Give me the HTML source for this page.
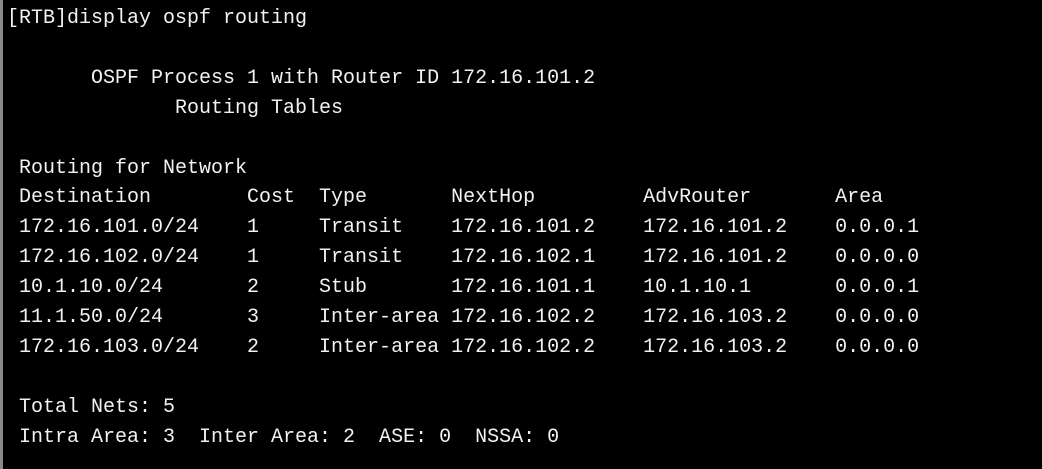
<!DOCTYPE html>
<html><head><style>
html,body{margin:0;padding:0;background:#000;width:1042px;height:469px;overflow:hidden}
.b{position:absolute;left:0;top:0;width:3px;height:469px;background:#8a8a8a}
pre{position:absolute;left:7px;top:4px;margin:0;font-family:"Liberation Mono","DejaVu Sans Mono",monospace;font-size:20px;line-height:29.9px;color:#f2f2f2;}
</style></head><body><div class="b"></div><pre>[RTB]display ospf routing

       OSPF Process 1 with Router ID 172.16.101.2
              Routing Tables

 Routing for Network
 Destination        Cost  Type       NextHop         AdvRouter       Area
 172.16.101.0/24    1     Transit    172.16.101.2    172.16.101.2    0.0.0.1
 172.16.102.0/24    1     Transit    172.16.102.1    172.16.101.2    0.0.0.0
 10.1.10.0/24       2     Stub       172.16.101.1    10.1.10.1       0.0.0.1
 11.1.50.0/24       3     Inter-area 172.16.102.2    172.16.103.2    0.0.0.0
 172.16.103.0/24    2     Inter-area 172.16.102.2    172.16.103.2    0.0.0.0

 Total Nets: 5
 Intra Area: 3  Inter Area: 2  ASE: 0  NSSA: 0
</pre></body></html>
